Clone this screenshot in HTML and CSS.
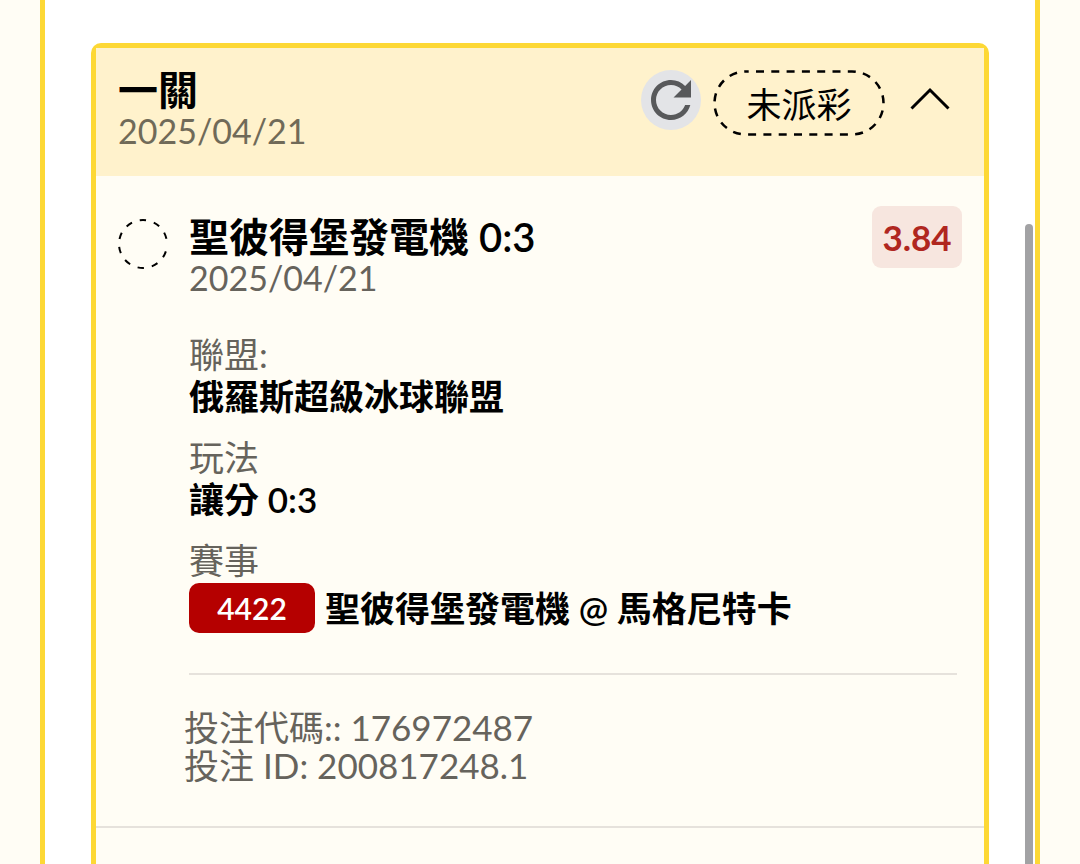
FILE: index.html
```html
<!DOCTYPE html>
<html lang="zh-Hant">
<head>
<meta charset="utf-8">
<meta name="viewport" content="width=device-width, initial-scale=1">
<title>投注紀錄</title>
<link rel="stylesheet" href="styles.css">
</head>
<body>
<main class="panel">
  <article class="card">
    <header class="card-header">
      <div class="heading">
        <h1 class="title">一關</h1>
        <p class="date">2025/04/21</p>
      </div>
      <div class="actions">
        <button class="refresh" type="button" aria-label="重新整理">
          <svg viewBox="0 0 24 24" aria-hidden="true">
            <path fill="#58595b" d="M17.650 6.350C16.200 4.900 14.210 4 12 4c-4.420 0-7.990 3.580-7.990 8s3.570 8 7.990 8c3.730 0 6.840-2.550 7.730-6h-2.080c-.820 2.330-3.040 4-5.650 4-3.310 0-6-2.690-6-6s2.690-6 6-6c1.660 0 3.140.690 4.220 1.780L13 11h7V4z"/>
          </svg>
        </button>
        <div class="status">
          <svg class="status-outline" viewBox="0 0 172 66" aria-hidden="true">
            <rect x="1.500" y="1.500" width="169" height="63" rx="31.500"/>
          </svg>
          <span>未派彩</span>
        </div>
        <button class="toggle" type="button" aria-label="收合">
          <svg viewBox="0 0 40 24" aria-hidden="true"><path d="M1.500 21.500 20 3 38.500 21.500"/></svg>
        </button>
      </div>
    </header>
    <section class="bet">
      <svg class="pending" viewBox="0 0 50 50" aria-hidden="true"><circle cx="25" cy="25" r="24"/></svg>
      <div class="bet-body">
        <div class="bet-top">
          <div>
            <h2 class="title">聖彼得堡發電機 0:3</h2>
            <p class="date">2025/04/21</p>
          </div>
          <span class="odds">3.84</span>
        </div>
        <dl class="details">
          <div><dt>聯盟:</dt><dd>俄羅斯超級冰球聯盟</dd></div>
          <div><dt>玩法</dt><dd>讓分 0:3</dd></div>
          <div><dt>賽事</dt><dd class="match"><span class="code">4422</span><span>聖彼得堡發電機 @ 馬格尼特卡</span></dd></div>
        </dl>
      </div>
    </section>
    <footer class="slip">
      <p>投注代碼:: 176972487</p>
      <p>投注 ID: 200817248.1</p>
    </footer>
  </article>
  <div class="scroll-thumb"></div>
</main>
</body>
</html>
```

FILE: styles.css
```css
* { box-sizing: border-box; }
html, body { height: 100%; }
body {
  margin: 0;
  padding: 0 40px;
  overflow: hidden;
  background: #fffdf5;
  color: #000;
  font-family: Lato, "Noto Sans CJK TC", sans-serif;
  font-size: 35px;
}
h1, h2, p, dl, dd { margin: 0; }
button { padding: 0; border: 0; background: none; cursor: pointer; }
svg { display: block; }

.panel {
  position: relative;
  display: flex;
  flex-direction: column;
  min-height: 100%;
  padding: 43px 46px 0;
  border: solid #fdd835;
  border-width: 0 5px;
  background: #fff;
}
.card {
  flex: 1;
  border: 5px solid #fdd835;
  border-bottom: 0;
  border-radius: 10px 10px 0 0;
  background: #fffdf5;
}
.card-header {
  display: flex;
  justify-content: space-between;
  align-items: flex-start;
  padding: 22px 34px 24px 22px;
  background: #fff2cc;
}
.title { font-size: 40px; font-weight: 600; line-height: 40px; }
.date { color: #66635c; font-size: 34px; line-height: 42px; }
.card-header .date { color: #706a58; }

.actions { display: flex; align-items: flex-start; }
.refresh {
  width: 60px;
  height: 60px;
  margin-right: 12px;
  border-radius: 50%;
  background: #e3e4e7;
}
.status {
  position: relative;
  width: 172px;
  line-height: 68px;
  text-align: center;
}
.status-outline { position: absolute; top: 0; left: 0; width: 172px; height: 66px; }
.status-outline rect {
  fill: none;
  stroke: #000;
  stroke-width: 2.5;
  stroke-dasharray: 8 7.300;
  stroke-dashoffset: 5.300;
}
.toggle { width: 40px; margin: 17px 0 0 25px; }
.toggle path { fill: none; stroke: #000; stroke-width: 3; }

.bet { display: flex; gap: 21px; padding: 30px 22px 0 22px; }
.pending { flex: none; width: 50px; height: 50px; margin-top: 13px; }
.pending circle {
  fill: none;
  stroke: #000;
  stroke-width: 2;
  stroke-dasharray: 6.500 8;
  stroke-dashoffset: 7;
}
.bet-body { flex: 1; }
.bet-top { display: flex; justify-content: space-between; align-items: flex-start; }
.bet-top .title { margin-top: 11px; }
.odds {
  width: 90px;
  border-radius: 9px;
  background: #f7e6df;
  color: #b0271f;
  font-weight: 700;
  line-height: 62px;
  text-align: center;
}
.details {
  display: grid;
  gap: 18px;
  margin: 34px 5px 0 0;
  padding-bottom: 40px;
  border-bottom: 2px solid #e6e2dc;
}
.details dt { color: #66635c; line-height: 42px; }
.details dd { font-weight: 600; line-height: 43px; }
.details .match { display: flex; gap: 10px; margin-top: 2px; line-height: 50px; }
.code {
  width: 126px;
  border-radius: 10px;
  background: #b50000;
  color: #fff;
  font-size: 30px;
  text-align: center;
}
.slip {
  padding: 33px 22px 42px 88px;
  border-bottom: 2px solid #e6e2dc;
  color: #66635c;
  line-height: 38px;
}
.scroll-thumb {
  position: absolute;
  top: 224px;
  right: 2px;
  bottom: 0;
  width: 8px;
  border-radius: 4px 4px 0 0;
  background: #a2a2a4;
}
```
